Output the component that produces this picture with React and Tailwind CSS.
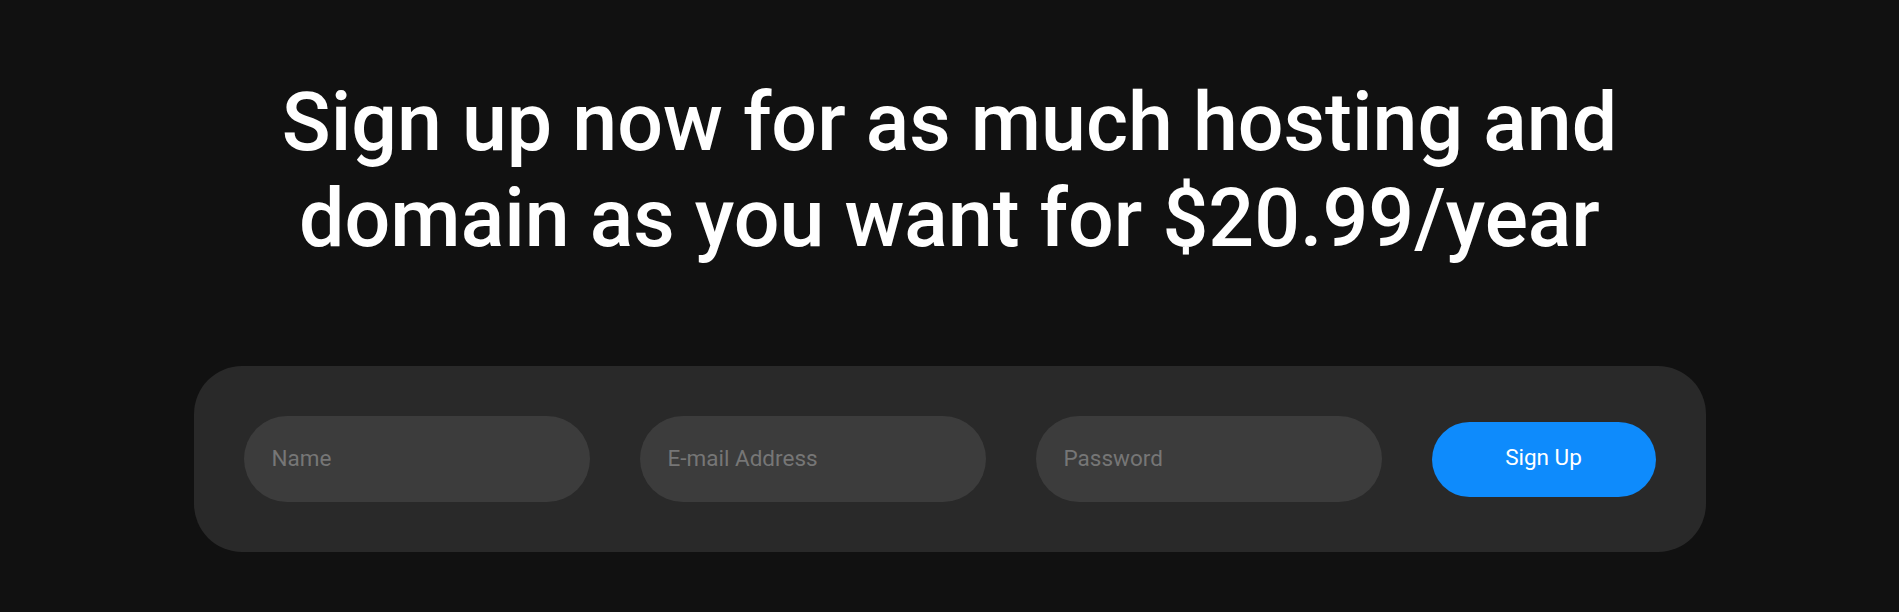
const inputClass =
    'w-[346px] h-[86px] shrink-0 rounded-full bg-[#3c3c3c] px-7 pb-[3px] text-[22.5px] text-white placeholder:text-[#767676] outline-none border-none';

const App = () => {
    return (
        <div
            className="min-h-[612px] w-full bg-[#111111] pt-[75px] pb-[60px]"
            style={{ fontFamily: 'Roboto, "Liberation Sans", sans-serif' }}
        >
            {/* Headline */}
            <h1 className="mx-auto w-[1512px] text-center text-[80.7px] leading-[96px] font-medium text-white">
                Sign up now for as much hosting and domain as you want for $20.99/year
            </h1>

            {/* Signup form */}
            <form
                onSubmit={(e) => e.preventDefault()}
                className="mx-auto mt-[99px] flex w-[1512px] items-center gap-[50px] rounded-[48px] bg-[#292929] p-[50px]"
            >
                <input type="text" placeholder="Name" className={inputClass} />
                <input type="email" placeholder="E-mail Address" className={inputClass} />
                <input type="password" placeholder="Password" className={inputClass} />
                <button
                    type="submit"
                    className="h-[75px] w-[224px] shrink-0 rounded-full bg-[#0e8bfc] pb-[2px] text-[22.5px] text-white"
                >
                    Sign Up
                </button>
            </form>
        </div>
    );
};

export default App;
